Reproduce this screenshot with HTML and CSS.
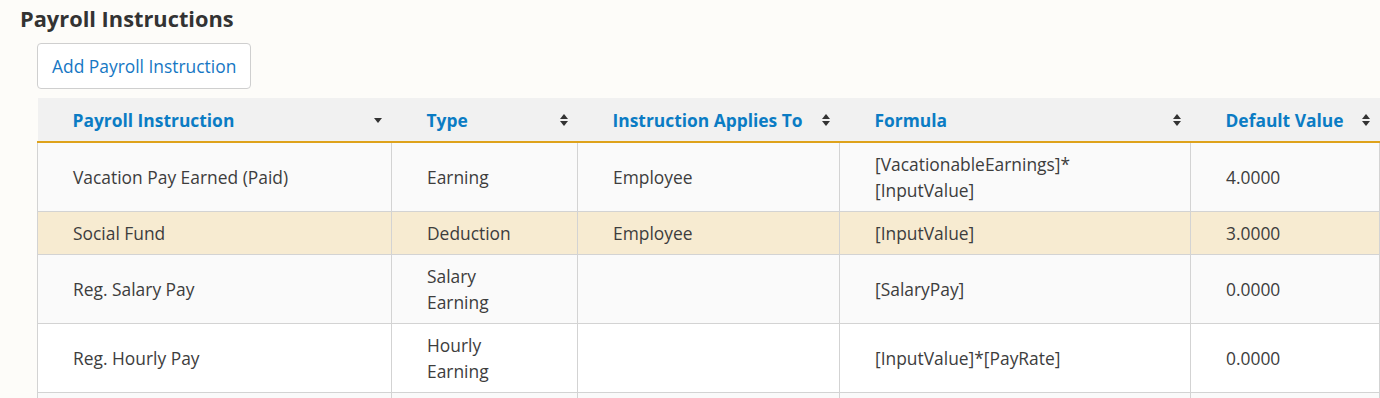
FILE: index.html
```html
<!DOCTYPE html>
<html>
<head>
    <title>Payroll Instructions</title>
    <link rel="stylesheet" href="styles.css">
</head>
<body>
    <div class="page">
        <h2 class="page-title">Payroll Instructions</h2>

        <div class="section">
            <button type="button" class="add-button">Add Payroll Instruction</button>

            <table class="grid">
                <colgroup>
                    <col class="col-name">
                    <col class="col-type">
                    <col class="col-applies">
                    <col class="col-formula">
                    <col class="col-default">
                </colgroup>
                <thead>
                    <tr>
                        <th><div class="th-inner">Payroll Instruction <span class="sort sort-desc"></span></div></th>
                        <th><div class="th-inner">Type <span class="sort"></span></div></th>
                        <th><div class="th-inner">Instruction Applies To <span class="sort"></span></div></th>
                        <th><div class="th-inner">Formula <span class="sort"></span></div></th>
                        <th><div class="th-inner">Default Value <span class="sort"></span></div></th>
                    </tr>
                </thead>
                <tbody>
                    <tr>
                        <td>Vacation Pay Earned (Paid)</td>
                        <td>Earning</td>
                        <td>Employee</td>
                        <td>[VacationableEarnings]*<wbr>[InputValue]</td>
                        <td>4.0000</td>
                    </tr>
                    <tr class="selected">
                        <td>Social Fund</td>
                        <td>Deduction</td>
                        <td>Employee</td>
                        <td>[InputValue]</td>
                        <td>3.0000</td>
                    </tr>
                    <tr>
                        <td>Reg. Salary Pay</td>
                        <td>Salary Earning</td>
                        <td></td>
                        <td>[SalaryPay]</td>
                        <td>0.0000</td>
                    </tr>
                    <tr>
                        <td>Reg. Hourly Pay</td>
                        <td>Hourly Earning</td>
                        <td></td>
                        <td>[InputValue]*[PayRate]</td>
                        <td>0.0000</td>
                    </tr>
                    <tr class="empty-row">
                        <td></td>
                        <td></td>
                        <td></td>
                        <td></td>
                        <td></td>
                    </tr>
                </tbody>
            </table>
        </div>
    </div>
</body>
</html>
```

FILE: styles.css
```css
html, body {
    margin: 0;
    padding: 0;
    background-color: #fdfcf9;
    font-family: "Open Sans", Arial, sans-serif;
    color: #3d3d3d;
    overflow: hidden;
}

.page {
    padding: 4px 0 0 20px;
}

.page-title {
    margin: 0;
    font-size: 21.8px;
    line-height: 30px;
    font-weight: 700;
    color: #333;
}

.section {
    padding: 9px 0 0 17px;
}

.add-button {
    display: block;
    margin: 0;
    padding: 11px 14px 11px 14px;
    font-family: "Open Sans", Arial, sans-serif;
    font-size: 17.4px;
    line-height: 22px;
    color: #1677c4;
    background-color: #fff;
    border: 1px solid #cfcfcf;
    border-radius: 4px;
    cursor: pointer;
}

.grid {
    margin-top: 9px;
    border-collapse: collapse;
    table-layout: fixed;
    width: 1342px;
    font-size: 17.4px;
    line-height: 26px;
}

.col-name { width: 354px; }
.col-type { width: 186px; }
.col-applies { width: 262px; }
.col-formula { width: 351px; }
.col-default { width: 189px; }

.grid th {
    background-color: #f1f1f1;
    border-bottom: 2px solid #dea21b;
    padding: 9px 9px 8px 35px;
    text-align: left;
    font-weight: 700;
    color: #0b7cc4;
}

.th-inner {
    display: flex;
    align-items: center;
    justify-content: space-between;
    white-space: nowrap;
}

.sort {
    display: inline-block;
    flex: none;
    width: 9px;
    height: 12px;
    position: relative;
}

.sort::before,
.sort::after {
    content: "";
    position: absolute;
    left: 0;
    border-left: 4.5px solid transparent;
    border-right: 4.5px solid transparent;
}

.sort::before {
    top: 0;
    border-bottom: 5px solid #333;
}

.sort::after {
    bottom: 0;
    border-top: 5px solid #333;
}

.sort-desc::before {
    display: none;
}

.sort-desc::after {
    bottom: 3px;
}

.grid td {
    padding: 8px 50px 8px 35px;
    border: 1px solid #d3d3d3;
    vertical-align: middle;
}

.grid tbody tr:nth-child(odd) td {
    background-color: #fafafa;
}

.grid tbody tr:nth-child(even) td {
    background-color: #fff;
}

.grid tbody tr.selected td {
    background-color: #f7ebd1;
}

.grid tbody tr.empty-row td {
    height: 26px;
}
```
